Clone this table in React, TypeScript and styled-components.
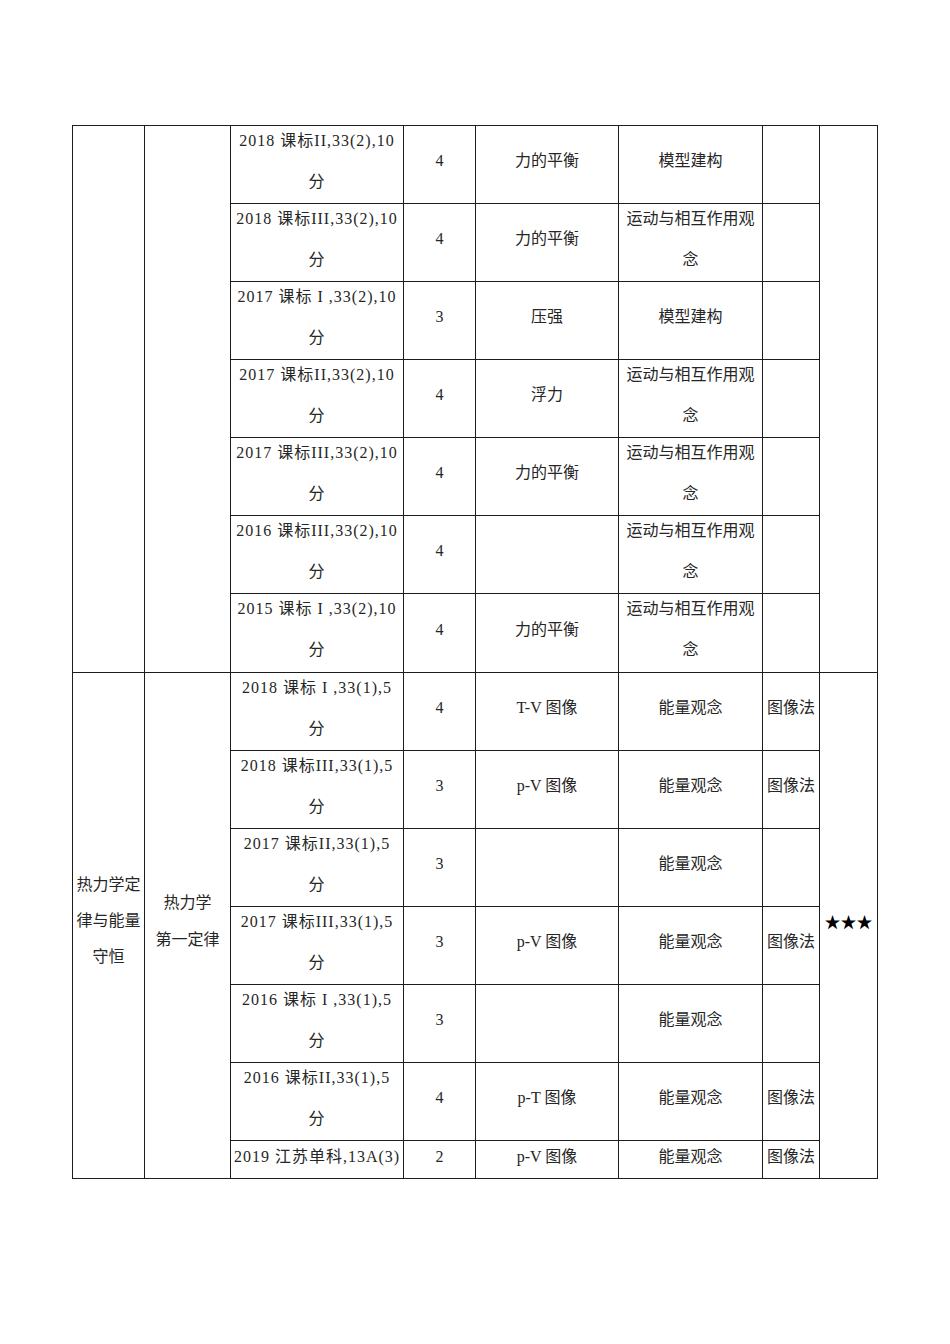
import React from "react";
import styled, { createGlobalStyle } from "styled-components";

const Global = createGlobalStyle`
  html, body { margin: 0; padding: 0; background: #fff; }
  body { font-family: "Liberation Serif", "Noto Sans CJK SC", serif; }
`;

const Page = styled.div`
  box-sizing: border-box;
  width: 950px;
  min-height: 1344px;
  padding: 125px 0 0 72px;
  background: #fff;
`;

const Table = styled.div`
  display: grid;
  grid-template-columns: 71px 85px 172px 71px 142px 143px 56px 57px;
  grid-template-rows: repeat(6, 77px) 78px repeat(6, 77px) 37px;
  gap: 1px;
  padding: 1px;
  background: #1c1c1c;
  width: max-content;
`;

const Cell = styled.div<{ $span?: number; $lh?: number; $pb?: number; $ls?: number }>`
  grid-row: span ${(p) => p.$span ?? 1};
  background: #fff;
  display: flex;
  flex-direction: column;
  align-items: center;
  justify-content: center;
  box-sizing: border-box;
  padding: 0 1px ${(p) => p.$pb ?? 8}px;
  min-width: 0;
  min-height: 0;
  text-align: center;
  white-space: nowrap;
  font-family: "Liberation Serif", "Noto Sans CJK SC", serif;
  font-size: 16px;
  letter-spacing: ${(p) => p.$ls ?? 0}px;
  line-height: ${(p) => p.$lh ?? 41}px;
  color: #262626;
`;

const Line = styled.span`
  display: block;
`;

const Stars = styled.span`
  font-family: "Noto Sans CJK SC", "DejaVu Sans", sans-serif;
  font-size: 16px;
  color: #000;
`;

type Row = {
  src: string[];
  diff: string;
  topic: string;
  lit: string[];
  method: string;
};

const section1: Row[] = [
  { src: ["2018 课标II,33(2),10", "分"], diff: "4", topic: "力的平衡", lit: ["模型建构"], method: "" },
  { src: ["2018 课标III,33(2),10", "分"], diff: "4", topic: "力的平衡", lit: ["运动与相互作用观", "念"], method: "" },
  { src: ["2017 课标 I ,33(2),10", "分"], diff: "3", topic: "压强", lit: ["模型建构"], method: "" },
  { src: ["2017 课标II,33(2),10", "分"], diff: "4", topic: "浮力", lit: ["运动与相互作用观", "念"], method: "" },
  { src: ["2017 课标III,33(2),10", "分"], diff: "4", topic: "力的平衡", lit: ["运动与相互作用观", "念"], method: "" },
  { src: ["2016 课标III,33(2),10", "分"], diff: "4", topic: "", lit: ["运动与相互作用观", "念"], method: "" },
  { src: ["2015 课标 I ,33(2),10", "分"], diff: "4", topic: "力的平衡", lit: ["运动与相互作用观", "念"], method: "" },
];

const section2: Row[] = [
  { src: ["2018 课标 I ,33(1),5", "分"], diff: "4", topic: "T-V 图像", lit: ["能量观念"], method: "图像法" },
  { src: ["2018 课标III,33(1),5", "分"], diff: "3", topic: "p-V 图像", lit: ["能量观念"], method: "图像法" },
  { src: ["2017 课标II,33(1),5", "分"], diff: "3", topic: "", lit: ["能量观念"], method: "" },
  { src: ["2017 课标III,33(1),5", "分"], diff: "3", topic: "p-V 图像", lit: ["能量观念"], method: "图像法" },
  { src: ["2016 课标 I ,33(1),5", "分"], diff: "3", topic: "", lit: ["能量观念"], method: "" },
  { src: ["2016 课标II,33(1),5", "分"], diff: "4", topic: "p-T 图像", lit: ["能量观念"], method: "图像法" },
  { src: ["2019 江苏单科,13A(3)"], diff: "2", topic: "p-V 图像", lit: ["能量观念"], method: "图像法" },
];

const Lines: React.FC<{ items: string[] }> = ({ items }) => (
  <>
    {items.map((t, i) => (
      <Line key={i}>{t}</Line>
    ))}
  </>
);

const RowCells: React.FC<{ row: Row; last?: boolean }> = ({ row, last }) => {
  const pb = last ? 7 : 8;
  return (
    <>
      <Cell $pb={pb} $ls={1}>
        <Lines items={row.src} />
      </Cell>
      <Cell $pb={pb}>{row.diff}</Cell>
      <Cell $pb={pb}>{row.topic}</Cell>
      <Cell $pb={pb}>
        <Lines items={row.lit} />
      </Cell>
      <Cell $pb={pb}>{row.method}</Cell>
    </>
  );
};

export default function App() {
  return (
    <Page>
      <Global />
      <Table>
        {section1.map((row, i) => (
          <React.Fragment key={"a" + i}>
            {i === 0 && (
              <>
                <Cell $span={7} />
                <Cell $span={7} />
              </>
            )}
            <RowCells row={row} />
            {i === 0 && <Cell $span={7} />}
          </React.Fragment>
        ))}
        {section2.map((row, i) => (
          <React.Fragment key={"b" + i}>
            {i === 0 && (
              <>
                <Cell $span={7} $lh={36} $pb={9}>
                  <Lines items={["热力学定", "律与能量", "守恒"]} />
                </Cell>
                <Cell $span={7} $lh={37} $pb={9}>
                  <Lines items={["热力学", "第一定律"]} />
                </Cell>
              </>
            )}
            <RowCells row={row} last={i === section2.length - 1} />
            {i === 0 && (
              <Cell $span={7} $pb={9}>
                <Stars>★★★</Stars>
              </Cell>
            )}
          </React.Fragment>
        ))}
      </Table>
    </Page>
  );
}
